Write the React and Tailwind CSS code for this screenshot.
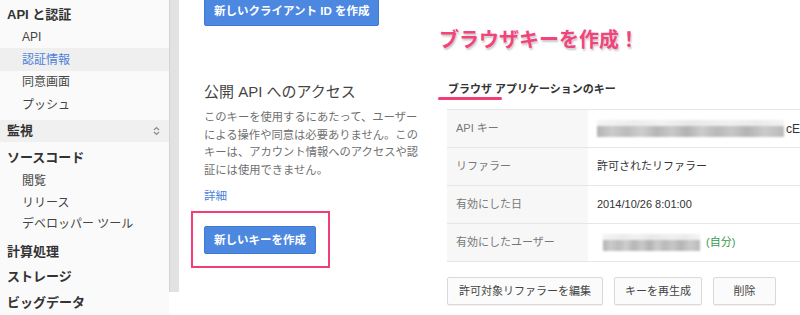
import React from "react";

const font = "font-['Liberation_Sans','Noto_Sans_CJK_JP',sans-serif]";

function UpDown() {
  return (
    <svg width="7" height="10" viewBox="0 0 7 10" fill="none" stroke="#8a8a8a" strokeWidth="1.2">
      <path d="M1 4 L3.5 1.5 L6 4" />
      <path d="M1 6 L3.5 8.5 L6 6" />
    </svg>
  );
}

function Header({ children, className = "" }) {
  return (
    <div className={`flex items-center pl-[7px] text-[13px] font-bold text-[#333] ${className}`}>{children}</div>
  );
}

function Sub({ children, active, h = "h-[23px]" }) {
  return (
    <div
      className={`flex items-center pl-[22px] text-[12px] ${h} ${
        active ? "bg-[#efefef] text-[#4d7fd9]" : "text-[#444]"
      }`}
    >
      {children}
    </div>
  );
}

function Blur({ w }) {
  return (
    <div className={`flex flex-col ${w} blur-[0.8px]`}>
      <div className="h-[6px] bg-[linear-gradient(90deg,#f4f4f4_0%,#ececec_20%,#f2f2f2_35%,#e8e8e8_50%,#f0f0f0_70%,#ebebeb_85%,#f3f3f3_100%)]" />
      <div className="h-[11px] bg-[linear-gradient(90deg,#b3b3b3_0%,#cbcbcb_8%,#bcbcbc_16%,#cecece_24%,#b6b6b6_32%,#c9c9c9_40%,#b2b2b2_48%,#cccccc_56%,#b9b9b9_64%,#c7c7c7_72%,#b4b4b4_80%,#cbcbcb_90%,#bababa_100%)]" />
    </div>
  );
}

function Row({ label, children }) {
  return (
    <div className="flex h-[38px] border-b border-[#e6e6e6]">
      <div className="flex w-[141px] shrink-0 items-center bg-[#f7f7f7] pl-[9px] text-[11px] text-[#777]">{label}</div>
      <div className="flex flex-1 items-center whitespace-nowrap pl-[9px] text-[11px] text-[#333]">{children}</div>
    </div>
  );
}

function GrayBtn({ children, w }) {
  return (
    <div
      className={`flex h-[28px] ${w} items-center justify-center rounded-[2px] border border-[#d9d9d9] bg-[#fbfbfb] text-[11px] text-[#444] shadow-[0_1px_1px_rgba(0,0,0,0.06)]`}
    >
      {children}
    </div>
  );
}

function BlueBtn({ children, className = "" }) {
  return (
    <div
      className={`flex h-[28px] items-center rounded-[2px] border border-[#3f79d3] bg-[#4c87e0] px-[9px] text-[11.5px] font-bold text-white ${className}`}
    >
      {children}
    </div>
  );
}

export default function App() {
  return (
    <div className={`flex h-[315px] w-[800px] overflow-hidden bg-white ${font}`}>
      {/* Sidebar */}
      <div className="flex w-[169px] shrink-0 flex-col bg-[#fafafa] leading-none">
        <Header className="h-[26px] pt-[3px]">API と認証</Header>
        <Sub>API</Sub>
        <Sub active>認証情報</Sub>
        <Sub>同意画面</Sub>
        <Sub>プッシュ</Sub>
        <div className="mt-[4px] flex h-[22px] items-center justify-between bg-[#f0f0f0] pr-[9px] pl-[7px] text-[13px] font-bold text-[#333]">
          <span>監視</span>
          <UpDown />
        </div>
        <Header className="mt-[3px] h-[26px]">ソースコード</Header>
        <Sub h="h-[22px]">閲覧</Sub>
        <Sub h="h-[22px]">リリース</Sub>
        <Sub h="h-[22px]">デベロッパー ツール</Sub>
        <Header className="mt-[3px] h-[26px]">計算処理</Header>
        <Header className="h-[26px]">ストレージ</Header>
        <Header className="h-[26px]">ビッグデータ</Header>
      </div>
      {/* Scroll track */}
      <div className="flex w-[10px] shrink-0 flex-col">
        <div className="h-[292px] border-l border-[#d4d4d4] bg-[#e2e2e2]" />
      </div>

      {/* Main */}
      <div className="flex min-w-0 flex-1 flex-col pl-[25px]">
        <div className="-mt-[2px] flex">
          <BlueBtn className="rounded-t-none">新しいクライアント ID を作成</BlueBtn>
        </div>
        <div className="flex">
          {/* Left column */}
          <div className="flex w-[234px] shrink-0 flex-col">
            <div className="mt-[56px] text-[15px] leading-[20px] text-[#444]">公開 API へのアクセス</div>
            <div className="mt-[7px] text-[11.3px] leading-[17.6px] whitespace-nowrap text-[#707070]">
              <div>このキーを使用するにあたって、ユーザー</div>
              <div>による操作や同意は必要ありません。この</div>
              <div>キーは、アカウント情報へのアクセスや認</div>
              <div>証には使用できません。</div>
            </div>
            <div className="mt-[8px] text-[11.5px] leading-[18px] text-[#4a7fd8]">詳細</div>
            <div className="mt-[6px] -ml-[13px] flex w-[139px] border-2 border-[#f23d75] pt-[13px] pb-[12px] pl-[11px]">
              <BlueBtn>新しいキーを作成</BlueBtn>
            </div>
          </div>
          {/* Right column */}
          <div className="flex min-w-0 flex-1 flex-col">
            <div className="mt-[2px] h-[24px] pl-[1px] text-[20px] leading-[24px] font-bold text-[#f2447c] [text-shadow:1px_2px_2px_rgba(0,0,0,0.22)]">
              ブラウザキーを作成！
            </div>
            <div className="relative mt-[30px] pl-[10px] text-[11px] leading-[14px] font-bold text-[#333]">
              ブラウザ アプリケーションのキー
              <div className="absolute top-[15px] left-0 h-[3px] w-[64px] rounded-full bg-[#f23d75]" />
            </div>
            <div className="mt-[13px] ml-[9px] flex flex-col border-t border-[#e6e6e6]">
              <Row label="API キー">
                <Blur w="w-[187px]" />
                <span className="ml-[2px] text-[12px] text-[#333]">cE</span>
              </Row>
              <Row label="リファラー">許可されたリファラー</Row>
              <Row label="有効にした日">2014/10/26 8:01:00</Row>
              <Row label="有効にしたユーザー">
                <div className="ml-[6px]">
                  <Blur w="w-[97px]" />
                </div>
                <span className="ml-[6px] text-[#3b9a4d]">(自分)</span>
              </Row>
            </div>
            <div className="mt-[15px] ml-[9px] flex gap-[11px]">
              <GrayBtn w="w-[156px]">許可対象リファラーを編集</GrayBtn>
              <GrayBtn w="w-[88px]">キーを再生成</GrayBtn>
              <GrayBtn w="w-[63px]">削除</GrayBtn>
            </div>
          </div>
        </div>
      </div>
    </div>
  );
}
